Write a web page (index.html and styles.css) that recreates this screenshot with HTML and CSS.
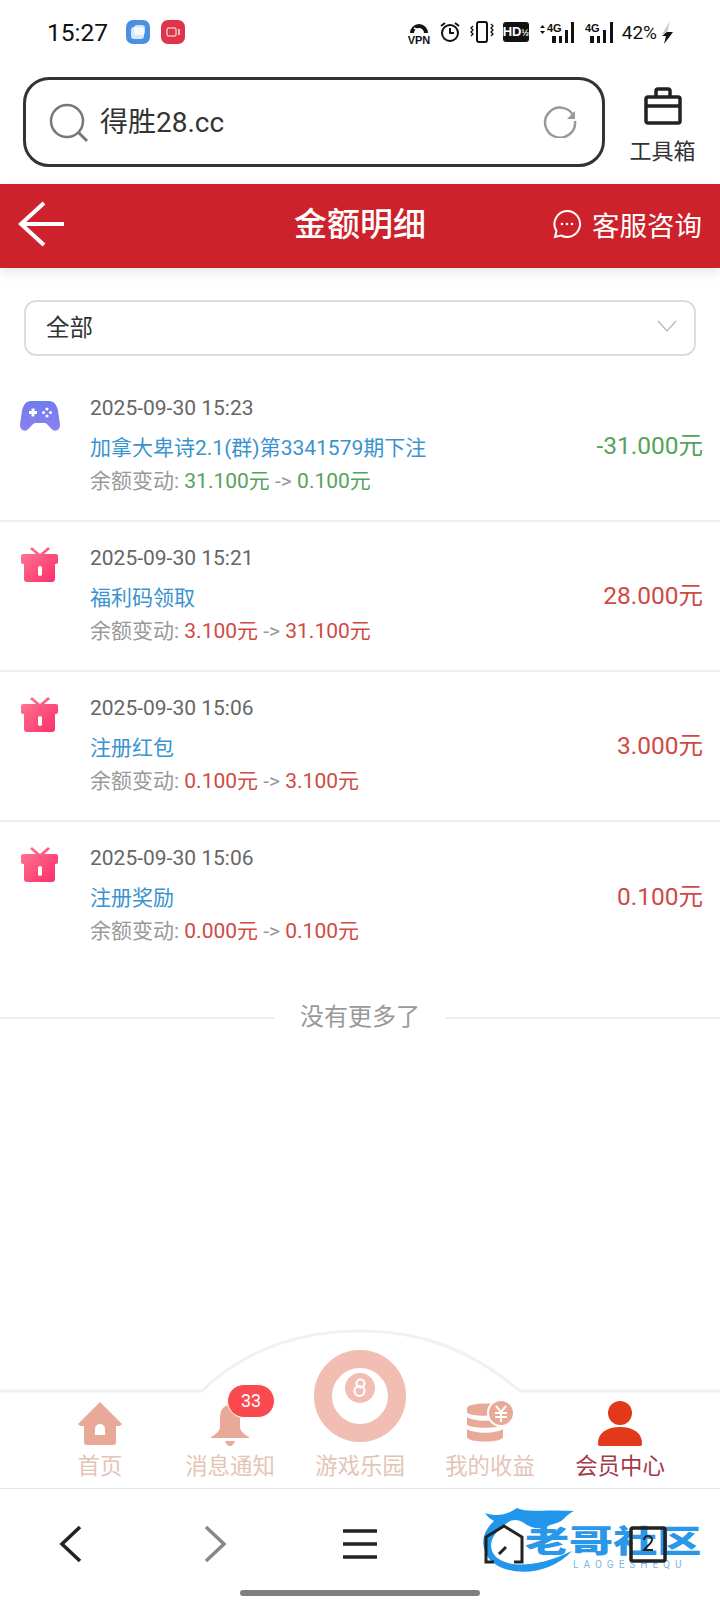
FILE: index.html

```html
<!DOCTYPE html>
<html lang="zh-CN">
<head>
  <meta charset="UTF-8" />
  <meta name="viewport" content="width=device-width, initial-scale=1.0"/>
  <title>金额明细</title>
  <link rel="stylesheet" href="styles.css">
</head>
<body>
  <div class="page">
    <div class="status">
      <span class="time">15:27</span>
      <svg class="app-dot" width="24" height="24" viewBox="0 0 24 24"><rect width="24" height="24" rx="7" fill="#4a90e2"/><rect x="5" y="7" width="13" height="12" rx="3" fill="#d8e8fb"/><rect x="8" y="5" width="11" height="10" rx="3" fill="#fff" opacity=".75"/></svg>
      <svg class="app-dot second" width="24" height="24" viewBox="0 0 24 24"><rect width="24" height="24" rx="7" fill="#e0344a"/><rect x="6" y="8" width="9" height="8" rx="1" fill="none" stroke="#fff" stroke-width="1"/><path d="M18 9v6" stroke="#fff" stroke-width="1.4"/></svg>
      <div class="status-right">
        <svg width="22" height="24" viewBox="0 0 22 24"><path d="M2 13a9 9 0 0 1 18 0h-4a5 5 0 0 0-10 0z" fill="#111"/><path d="M6 8l6 3" stroke="#fff" stroke-width="1.500"/><text x="11" y="23.500" class="tiny" text-anchor="middle">VPN</text></svg>
        <svg width="22" height="24" viewBox="0 0 22 24"><circle cx="11" cy="13" r="8" fill="none" stroke="#111" stroke-width="2"/><path d="M11 8v5h4M2 6l4-3M20 6l-4-3" fill="none" stroke="#111" stroke-width="2"/></svg>
        <svg width="24" height="24" viewBox="0 0 24 24"><rect x="7" y="2" width="10" height="20" rx="2" fill="none" stroke="#111" stroke-width="2"/><path d="M3 6l-2 2 2 2-2 2 2 2-2 2M21 4l2 2-2 2 2 2-2 2 2 2-2 2" fill="none" stroke="#111" stroke-width="1.300"/></svg>
        <span class="hd">HD<small>½</small></span>
        <svg width="38" height="22" viewBox="0 0 38 22"><path d="M2 7l2.500-3 2.500 3zM2 10l2.500 3 2.500-3z" fill="#111"/><text x="9" y="11" class="tiny">4G</text><path d="M14 15h4v7h-4zM21 15h3v7h-3zM27 9h3v13h-3zM33 1h3v21h-3z" fill="#111"/></svg>
        <svg width="30" height="22" viewBox="0 0 30 22"><text x="0" y="11" class="tiny">4G</text><path d="M5 15h4v7H5zM12 15h3v7h-3zM18 9h3v13h-3zM25 1h3v21h-3z" fill="#111"/></svg>
        <span class="battery">42%</span>
        <svg class="bolt" width="12" height="24" viewBox="0 0 12 24"><path d="M9 1L1 14h5z" fill="#ccc"/><path d="M6 12h6L3 24l2-8H1z" fill="#111"/></svg>
      </div>
    </div>

    <div class="browser-bar">
      <div class="search">
        <svg class="glass" width="44" height="44" viewBox="0 0 44 44"><circle cx="20" cy="20" r="16" fill="none" stroke="#777" stroke-width="2.500"/><path d="M32 32l8 8" stroke="#777" stroke-width="3"/></svg>
        <span class="url">得胜28.cc</span>
        <svg class="reload" width="36" height="36" viewBox="0 0 36 36"><path d="M32 15a15 15 0 1 0 1 4" fill="none" stroke="#999" stroke-width="2.500"/><path d="M33 9v8h-8z" fill="#999"/></svg>
      </div>
      <div class="toolbox">
        <svg width="38" height="38" viewBox="0 0 38 38"><rect x="2" y="10" width="34" height="26" rx="2" fill="none" stroke="#222" stroke-width="3.500"/><path d="M12 10V4a2 2 0 0 1 2-2h10a2 2 0 0 1 2 2v6M2 19h34" fill="none" stroke="#222" stroke-width="3.500"/></svg>
        <span>工具箱</span>
      </div>
    </div>

    <header class="topbar">
      <svg class="back" width="48" height="48" viewBox="0 0 48 48"><path d="M46 24H4M26 3L3 24l23 21" fill="none" stroke="#fff" stroke-width="4"/></svg>
      <h1>金额明细</h1>
      <div class="service">
        <svg width="30" height="30" viewBox="0 0 30 30"><path d="M15 2a13 13 0 1 1-6 24.500L3 28l1.500-6A13 13 0 0 1 15 2z" fill="none" stroke="#fff" stroke-width="2"/><circle cx="10" cy="15" r="1.300" fill="#fff"/><circle cx="15" cy="15" r="1.300" fill="#fff"/><circle cx="20" cy="15" r="1.300" fill="#fff"/></svg>
        <span>客服咨询</span>
      </div>
    </header>

    <main class="content">
      <div class="select">
        <span>全部</span>
        <svg width="20" height="14" viewBox="0 0 20 14"><path d="M1 2l9 10 9-10" fill="none" stroke="#bbb" stroke-width="1.500"/></svg>
      </div>

      <div class="list">
        <div class="row">
          <svg class="row-icon" width="40" height="40" viewBox="0 0 40 40"><defs><linearGradient id="pad" x1="0" y1="0" x2="0" y2="1"><stop offset="0" stop-color="#6f7cf0"/><stop offset="1" stop-color="#8a82ea"/></linearGradient></defs><path d="M11 3h18c5 0 8 4 9 10l2 13c.5 5-3 8-7 6-3-2-5-6-8-7h-10c-3 1-5 5-8 7-4 2-7.500-1-7-6l2-13C3 7 6 3 11 3z" fill="url(#pad)"/><path d="M9 13h8v3H9zM11.500 10.500h3v8h-3z" fill="#fff"/><circle cx="27" cy="11" r="1.600" fill="#fff"/><circle cx="27" cy="18" r="1.600" fill="#fff"/><circle cx="23.500" cy="14.500" r="1.600" fill="#fff"/><circle cx="30.500" cy="14.500" r="1.600" fill="#fff"/></svg>
          <div class="row-text">
            <div class="date">2025-09-30 15:23</div>
            <div class="title">加拿大卑诗2.1(群)第3341579期下注</div>
            <div class="balance">余额变动: <em class="minus">31.100元</em> -&gt; <em class="minus">0.100元</em></div>
          </div>
          <div class="amount minus">-31.000元</div>
        </div>

        <div class="row">
          <svg class="row-icon gift-icon" width="40" height="40" viewBox="0 0 40 40"><use href="#gift"/></svg>
          <div class="row-text">
            <div class="date">2025-09-30 15:21</div>
            <div class="title">福利码领取</div>
            <div class="balance">余额变动: <em class="plus">3.100元</em> -&gt; <em class="plus">31.100元</em></div>
          </div>
          <div class="amount plus">28.000元</div>
        </div>

        <div class="row">
          <svg class="row-icon gift-icon" width="40" height="40" viewBox="0 0 40 40"><use href="#gift"/></svg>
          <div class="row-text">
            <div class="date">2025-09-30 15:06</div>
            <div class="title">注册红包</div>
            <div class="balance">余额变动: <em class="plus">0.100元</em> -&gt; <em class="plus">3.100元</em></div>
          </div>
          <div class="amount plus">3.000元</div>
        </div>

        <div class="row last">
          <svg class="row-icon gift-icon" width="40" height="40" viewBox="0 0 40 40"><use href="#gift"/></svg>
          <div class="row-text">
            <div class="date">2025-09-30 15:06</div>
            <div class="title">注册奖励</div>
            <div class="balance">余额变动: <em class="plus">0.000元</em> -&gt; <em class="plus">0.100元</em></div>
          </div>
          <div class="amount plus">0.100元</div>
        </div>
      </div>

      <div class="no-more"><span>没有更多了</span></div>
    </main>

    <nav class="tabbar">
      <svg class="arc" width="720" height="70" viewBox="0 0 720 70"><path d="M-2 64H202C250 17 310 4 360 4c60 0 110 18 160 60h202" fill="#fff" stroke="#f1f1f1" stroke-width="3"/></svg>
      <div class="tab">
        <svg width="46" height="46" viewBox="0 0 46 46"><path d="M23 2L1 24l2 2h4v16a3 3 0 0 0 3 3h26a3 3 0 0 0 3-3V26h4l2-2z" fill="#e8a999"/><path d="M18 35v-6a5 5 0 0 1 10 0v6z" fill="#fff"/></svg>
        <span>首页</span>
      </div>
      <div class="tab">
        <svg width="46" height="46" viewBox="0 0 46 46"><path d="M23 5c-7 0-10 6-10 13v9c0 4-5 8-9 10v1h38v-1c-4-2-9-6-9-10v-9c0-7-3-13-10-13z" fill="#e8a999"/><path d="M18 41h10c-1 3-3 5-5 5s-4-2-5-5z" fill="#e8a999"/></svg>
        <span>消息通知</span>
        <b class="badge">33</b>
      </div>
      <div class="tab">
        <svg class="ball" width="92" height="92" viewBox="0 0 92 92"><circle cx="46" cy="46" r="37" fill="none" stroke="#f2bdb3" stroke-width="18"/><circle cx="46" cy="38" r="15" fill="#f2bdb3"/><circle cx="46.500" cy="33.500" r="4" fill="none" stroke="#fff" stroke-width="2.200"/><circle cx="45.500" cy="41" r="5" fill="none" stroke="#fff" stroke-width="2.200"/></svg>
        <span>游戏乐园</span>
      </div>
      <div class="tab">
        <svg width="50" height="46" viewBox="0 0 50 46"><path d="M2 8c0-6 36-6 36 0v4c0 5-36 5-36 0zM2 17c8 5 28 5 36 0v7c0 5-36 5-36 0zM2 29c8 5 28 5 36 0v8c0 6-36 6-36 0z" fill="#e8a999"/><circle cx="36" cy="13" r="13" fill="#e8a999" stroke="#fff" stroke-width="2"/><path d="M31 6l5 6 5-6M30 13h12M30 17h12M36 12v10" fill="none" stroke="#fff" stroke-width="2"/></svg>
        <span>我的收益</span>
      </div>
      <div class="tab active">
        <svg width="46" height="46" viewBox="0 0 46 46"><circle cx="23" cy="13" r="12" fill="#e2391a"/><path d="M3 46c-2 0-2-2-2-3 0-10 9-16 22-16s22 6 22 16c0 1 0 3-2 3z" fill="#e2391a"/></svg>
        <span>会员中心</span>
      </div>
    </nav>

    <footer class="browser-nav">
      <div class="nav-icons">
        <svg width="40" height="40" viewBox="0 0 40 40"><path d="M28 3L10 20l18 17" fill="none" stroke="#222" stroke-width="3.500"/></svg>
        <svg width="40" height="40" viewBox="0 0 40 40"><path d="M10 3l18 17-18 17" fill="none" stroke="#888" stroke-width="3.500"/></svg>
        <svg width="40" height="40" viewBox="0 0 40 40"><path d="M3 7h34M3 20h34M3 33h34" stroke="#222" stroke-width="3.500"/></svg>
        <svg width="40" height="40" viewBox="0 0 40 40"><path d="M10 38H2V13L20 2l18 11v25h-8M15 30l7-7" fill="none" stroke="#222" stroke-width="3"/></svg>
        <svg width="40" height="40" viewBox="0 0 40 40"><rect x="3" y="4" width="34" height="33" rx="2" fill="none" stroke="#222" stroke-width="3.500"/><path d="M16 16a4 4 0 0 1 8 0c0 3-5 6-8 10h9" fill="none" stroke="#222" stroke-width="2"/></svg>
      </div>
      <div class="home-bar"></div>
      <div class="watermark">
        <svg width="222" height="70" viewBox="0 0 222 70"><path d="M3 8C15 12 25 10 35 3C45 8 60 4 92 6C80 12 85 16 68 20C60 25 50 24 42 18C36 14 30 14 25 18C10 28 4 42 14 52C26 62 52 64 90 46C72 66 40 72 18 62C-2 52-4 30 12 16C8 14 5 11 3 8Z" fill="#2196ea"/></svg>
        <span class="wm-name">老哥社区</span>
        <span class="wm-sub">LAOGESHEQU</span>
      </div>
    </footer>
  </div>

  <svg class="defs" width="0" height="0"><defs>
    <linearGradient id="giftfill" x1="0" y1="0" x2="1" y2="1"><stop offset="0" stop-color="#ff7a95"/><stop offset="1" stop-color="#fb2c68"/></linearGradient>
    <g id="gift">
      <path d="M12 1l8 7 8-7 2 2-6 5h12a2 2 0 0 1 2 2v6a2 2 0 0 1-2 2h-1v15a3 3 0 0 1-3 3H7a3 3 0 0 1-3-3V18H3a2 2 0 0 1-2-2v-6a2 2 0 0 1 2-2h13l-6-5z" fill="url(#giftfill)"/>
      <rect x="18" y="20" width="4" height="10" rx="2" fill="#fff"/>
    </g>
  </defs></svg>
</body>
</html>
```

FILE: styles.css

```css
* {
  box-sizing: border-box;
}
body {
  margin: 0;
  background: #fff;
  font-family: Roboto, "Noto Sans CJK SC", sans-serif;
  color: #333;
}
.page {
  width: 720px;
  height: 1600px;
  display: flex;
  flex-direction: column;
  overflow: hidden;
}
.defs {
  position: absolute;
}

/* phone status bar */
.status {
  height: 64px;
  display: flex;
  align-items: center;
  padding-left: 47px;
  color: #111;
}
.time {
  font-size: 24.500px;
  width: 79px;
  white-space: nowrap;
}
.app-dot.second {
  margin-left: 11px;
}
.status-right {
  margin-left: auto;
  margin-right: 47px;
  display: flex;
  align-items: center;
  gap: 9px;
}
.tiny {
  font-family: "Liberation Sans", sans-serif;
  font-size: 11px;
  font-weight: bold;
  fill: #111;
}
.hd {
  width: 26px;
  height: 20px;
  background: #111;
  color: #fff;
  border-radius: 3px;
  font: bold 13px/20px "Liberation Sans", sans-serif;
  text-align: center;
  white-space: nowrap;
  overflow: hidden;
}
.hd small {
  font-size: 9px;
}
.battery {
  font-size: 19px;
  margin-left: -2px;
}
.bolt {
  margin-left: -5px;
}

/* browser address bar */
.browser-bar {
  height: 120px;
  display: flex;
  padding: 13px 0 17px 23px;
}
.search {
  width: 582px;
  height: 90px;
  border: 3px solid #333;
  border-radius: 26px;
  display: flex;
  align-items: center;
  padding: 0 24px 0 21px;
}
.glass {
  margin-top: 2px;
}
.url {
  font-size: 28px;
  margin: 0 0 4px 9px;
  color: #333;
}
.reload {
  margin: 0 0 4px auto;
}
.toolbox {
  flex: 1;
  display: flex;
  flex-direction: column;
  align-items: center;
  padding-top: 10px;
  font-size: 22px;
  color: #333;
  white-space: nowrap;
}
.toolbox span {
  line-height: 28px;
  margin-top: 13px;
}

/* red page header */
.topbar {
  position: relative;
  height: 84px;
  background: #cd212b;
  color: #fff;
  display: flex;
  align-items: center;
  justify-content: space-between;
  padding: 0 18px 4px 18px;
  box-shadow: 0 4px 12px rgba(0,0,0,0.1);
}
.topbar h1 {
  font-size: 33px;
  font-weight: 500;
  margin: -4px 0 0;
  position: absolute;
  left: 0;
  right: 0;
  text-align: center;
}
.service {
  display: flex;
  align-items: center;
  gap: 10px;
  font-size: 27.500px;
}

/* filter + list */
.content {
  flex: 1;
  padding-top: 32px;
}
.select {
  width: 672px;
  height: 56px;
  margin-left: 24px;
  border: 2px solid #ddd;
  border-radius: 12px;
  display: flex;
  align-items: center;
  justify-content: space-between;
  padding: 0 17px 4px 20px;
  font-size: 23.500px;
  color: #333;
}
.list {
  margin-top: 16px;
}
.row {
  display: flex;
  height: 150px;
  padding: 24px 17px 0 20px;
  border-bottom: 2px solid #eee;
}
.row.last {
  border-bottom: none;
}
.row-icon {
  margin-top: 2px;
  flex-shrink: 0;
}
.row-icon.gift-icon {
  margin-top: 0;
}
.row-text {
  margin-left: 30px;
  font-size: 21px;
}
.date {
  line-height: 24px;
  color: #666;
}
.title {
  line-height: 28px;
  margin-top: 14px;
  color: #3a93cf;
}
.balance {
  line-height: 28px;
  margin-top: 5px;
  color: #999;
}
.balance em {
  font-style: normal;
}
.amount {
  margin-left: auto;
  align-self: center;
  margin-top: -30px;
  font-size: 24.500px;
}
.minus {
  color: #55a359;
}
.plus {
  color: #cf4a44;
}
.no-more {
  display: flex;
  align-items: center;
  gap: 26px;
  margin-top: 28px;
  font-size: 24px;
  line-height: 34px;
  color: #999;
}
.no-more::before,
.no-more::after {
  content: "";
  flex: 1;
  height: 2px;
  margin-top: 2px;
  background: #eee;
}

/* site tab bar */
.tabbar {
  position: relative;
  height: 96px;
  display: grid;
  grid-template-columns: repeat(5, 130px);
  padding: 8px 35px 0;
}
.arc {
  position: absolute;
  left: 0;
  top: -65px;
}
.tab {
  position: relative;
  display: flex;
  flex-direction: column;
  align-items: center;
  gap: 6px;
  font-size: 22.400px;
  line-height: 28px;
  color: #e5c4b8;
  white-space: nowrap;
}
.tab.active {
  color: #a33a4a;
}
.ball {
  margin: -50px 0 4px;
}
.badge {
  position: absolute;
  left: 62px;
  top: -16px;
  width: 48px;
  height: 34px;
  background: #fa4a4f;
  border: 1px solid #fff;
  border-radius: 17px;
  color: #fff;
  font-size: 18px;
  font-weight: 400;
  line-height: 32px;
  text-align: center;
}

/* browser bottom nav */
.browser-nav {
  position: relative;
  height: 112px;
  border-top: 1px solid #e5e5e5;
}
.nav-icons {
  position: relative;
  z-index: 1;
  display: grid;
  grid-template-columns: repeat(5, 144px);
  justify-items: center;
  padding-top: 35px;
}
.nav-icons svg {
  display: block;
}
.home-bar {
  width: 240px;
  height: 6px;
  margin: 26px auto 0;
  border-radius: 3px;
  background: #808080;
}
.watermark {
  position: absolute;
  left: 482px;
  top: 16px;
  width: 222px;
  height: 70px;
}
.watermark svg {
  position: absolute;
  left: 0;
  top: 0;
}
.wm-name {
  position: absolute;
  left: 43px;
  top: 14px;
  font-size: 38px;
  line-height: 44px;
  font-weight: 900;
  color: #2a97ea;
  white-space: nowrap;
  transform-origin: left center;
  transform: scale(1.16, 0.82);
}
.wm-sub {
  position: absolute;
  left: 91px;
  top: 54px;
  font-size: 10px;
  line-height: 12px;
  letter-spacing: 5px;
  color: #7db5e5;
}
```
